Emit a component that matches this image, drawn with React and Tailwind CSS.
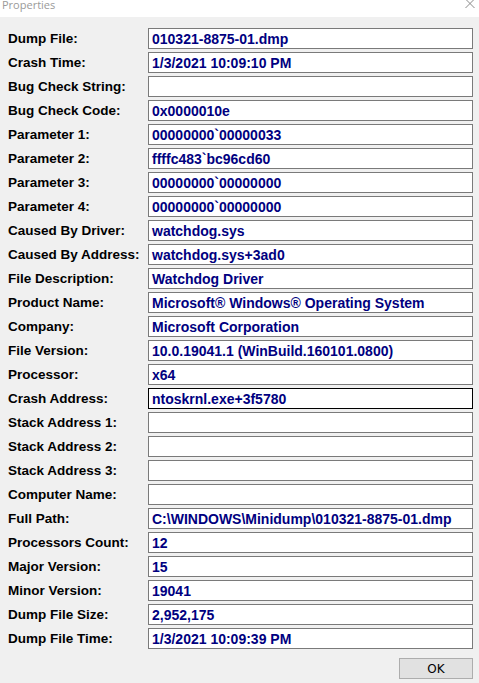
import React from "react";

const rows = [
  ["Dump File:", "010321-8875-01.dmp"],
  ["Crash Time:", "1/3/2021 10:09:10 PM"],
  ["Bug Check String:", ""],
  ["Bug Check Code:", "0x0000010e"],
  ["Parameter 1:", "00000000`00000033"],
  ["Parameter 2:", "ffffc483`bc96cd60"],
  ["Parameter 3:", "00000000`00000000"],
  ["Parameter 4:", "00000000`00000000"],
  ["Caused By Driver:", "watchdog.sys"],
  ["Caused By Address:", "watchdog.sys+3ad0"],
  ["File Description:", "Watchdog Driver"],
  ["Product Name:", "Microsoft® Windows® Operating System"],
  ["Company:", "Microsoft Corporation"],
  ["File Version:", "10.0.19041.1 (WinBuild.160101.0800)"],
  ["Processor:", "x64"],
  ["Crash Address:", "ntoskrnl.exe+3f5780", true],
  ["Stack Address 1:", ""],
  ["Stack Address 2:", ""],
  ["Stack Address 3:", ""],
  ["Computer Name:", ""],
  ["Full Path:", "C:\\WINDOWS\\Minidump\\010321-8875-01.dmp"],
  ["Processors Count:", "12"],
  ["Major Version:", "15"],
  ["Minor Version:", "19041"],
  ["Dump File Size:", "2,952,175"],
  ["Dump File Time:", "1/3/2021 10:09:39 PM"],
];

export default function App() {
  return (
    <div className="w-[479px] h-[683px] bg-[#f0f0f0] overflow-hidden flex flex-col" style={{ fontFamily: '"Liberation Sans", Arial, sans-serif' }}>
      <div className="h-[17px] bg-white flex items-start justify-between overflow-hidden shrink-0">
        <span className="ml-[2px] mt-[-2px] text-[11px] leading-[13px] text-[#9a9a9a]" style={{ fontFamily: '"Open Sans", "Noto Sans", sans-serif' }}>Properties</span>
        <svg width="12" height="10" viewBox="0 0 12 10" className="mr-[3px]">
          <path d="M1.5 -1 L10.5 8 M10.5 -1 L1.5 8" stroke="#8a8a8a" strokeWidth="1" fill="none" />
        </svg>
      </div>
      <div className="flex flex-col gap-[3px] pt-[11px] pl-[8px]">
        {rows.map(([label, value, focused]) => (
          <div key={label} className="flex items-center h-[21px]">
            <div className="w-[140px] shrink-0 text-[13.5px] font-bold text-black leading-none">{label}</div>
            <div className={`w-[325px] h-[21px] bg-white border flex items-center pl-[3px] text-[14px] font-bold text-[#000080] leading-none whitespace-nowrap overflow-hidden ${focused ? "border-black" : "border-[#7a7a7a]"}`}>
              {value}
            </div>
          </div>
        ))}
      </div>
      <div className="flex justify-end pr-[6px] mt-[9px]">
        <div className="w-[74px] h-[21px] bg-[#e1e1e1] border border-[#adadad] flex items-center justify-center text-[12px] text-black" style={{ fontFamily: '"DejaVu Sans", sans-serif' }}>
          OK
        </div>
      </div>
    </div>
  );
}
